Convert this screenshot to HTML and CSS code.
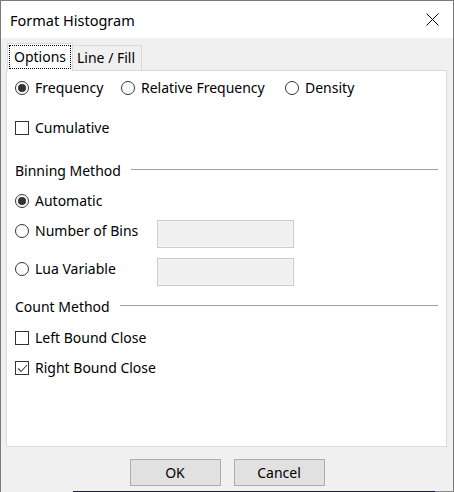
FILE: index.html
```html
<!DOCTYPE html>
<html>
<head>
<meta charset="utf-8">
<link rel="stylesheet" href="styles.css">
</head>
<body>
<div class="window">
  <div class="titlebar">
    <span class="title">Format Histogram</span>
    <svg class="close" width="13" height="13" viewBox="0 0 13 13"><path d="M0.5 0.5 L12.5 12.5 M12.5 0.5 L0.5 12.5" stroke="#000" stroke-width="1" fill="none"/></svg>
  </div>
  <div class="client">
    <div class="tabs">
      <div class="tab active"><span class="focus">Options</span></div>
      <div class="tab">Line / Fill</div>
    </div>
    <div class="panel">
      <div class="row r1">
        <label class="opt w1"><span class="radio on"></span>Frequency</label>
        <label class="opt w2"><span class="radio"></span>Relative Frequency</label>
        <label class="opt"><span class="radio"></span>Density</label>
      </div>
      <div class="row r2">
        <label class="opt"><span class="check"></span>Cumulative</label>
      </div>
      <div class="group r3"><span>Binning Method</span><span class="rule"></span></div>
      <div class="row r4">
        <label class="opt"><span class="radio on"></span>Automatic</label>
      </div>
      <div class="row inrow r5">
        <label class="opt wl"><span class="radio"></span>Number of Bins</label>
        <div class="field"></div>
      </div>
      <div class="row inrow r6">
        <label class="opt wl"><span class="radio"></span>Lua Variable</label>
        <div class="field"></div>
      </div>
      <div class="group r7"><span>Count Method</span><span class="rule"></span></div>
      <div class="row r8">
        <label class="opt"><span class="check"></span>Left Bound Close</label>
      </div>
      <div class="row r9">
        <label class="opt"><span class="check on"><svg width="11" height="11" viewBox="0 0 11 11"><path d="M1 5.5 L4 8.5 L10 2" stroke="#444" stroke-width="1.1" fill="none"/></svg></span>Right Bound Close</label>
      </div>
    </div>
    <div class="buttons">
      <button class="btn">OK</button>
      <button class="btn">Cancel</button>
    </div>
  </div>
  <div class="bottomedge"></div>
</div>
</body>
</html>
```
FILE: styles.css
```css
* { box-sizing: border-box; }
html, body { margin: 0; padding: 0; }
body {
  width: 454px;
  height: 492px;
  font-family: "Noto Sans", "Open Sans", sans-serif;
  font-size: 14px;
  color: #000;
  background: #f0f0f0;
  overflow: hidden;
}
.window {
  width: 454px;
  height: 492px;
  border: 1px solid #7a7a7a;
  border-bottom: none;
  display: flex;
  flex-direction: column;
  background: #f0f0f0;
}
.titlebar {
  height: 37px;
  background: #fff;
  display: flex;
  align-items: center;
  justify-content: space-between;
  padding: 0 14px 0 9px;
  flex: none;
}
.title { font-size: 14.5px; line-height: 20px; }
.close { display: block; }
.client {
  flex: 1;
  padding: 5px 6px 0 5px;
  display: flex;
  flex-direction: column;
}
.tabs {
  display: flex;
  height: 27px;
  padding-left: 1px;
  position: relative;
  z-index: 2;
}
.tab {
  border: 1px solid #d9d9d9;
  border-bottom: none;
  line-height: 20px;
}
.tab.active {
  width: 66px;
  height: 28px;
  background: #fff;
  padding: 1px 1px 0 1px;
}
.focus {
  display: block;
  outline: 1px dotted #000;
  outline-offset: -1px;
  height: 24px;
  line-height: 24px;
  padding-left: 5px;
}
.tab:not(.active) {
  width: 69px;
  height: 25px;
  margin-top: 2px;
  border-left: none;
  padding-left: 4px;
  line-height: 24px;
}
.panel {
  height: 377px;
  background: #fff;
  border: 1px solid #d9d9d9;
  padding: 0 8px 0 8px;
  display: flex;
  flex-direction: column;
}
.row { display: flex; align-items: center; height: 20px; flex: none; }
.opt { display: flex; align-items: center; height: 20px; line-height: 20px; white-space: nowrap; }
.w1 { width: 106px; }
.w2 { width: 164px; }
.wl { width: 142px; margin-top: 1px; }
.radio {
  width: 14px; height: 14px;
  border: 1px solid #333;
  border-radius: 50%;
  background: #fff;
  margin-right: 6px;
  display: flex; align-items: center; justify-content: center;
  flex: none;
}
.radio.on::after {
  content: "";
  width: 8px; height: 8px;
  border-radius: 50%;
  background: #333;
}
.check {
  width: 14px; height: 14px;
  border: 1px solid #333;
  background: #fff;
  margin-right: 6px;
  flex: none;
  display: flex; align-items: center; justify-content: center;
}
.check svg { display: block; }
.group { display: flex; align-items: center; height: 20px; flex: none; }
.rule { flex: 1; height: 1px; background: #a0a0a0; margin-left: 10px; margin-top: -1px; }
.inrow { height: 28px; align-items: flex-start; }
.field {
  width: 137px; height: 28px;
  border: 1px solid #cccccc;
  outline: 1px solid #f5f5f5;
  outline-offset: -2px;
  background: #f0f0f0;
}
.r1 { margin-top: 7px; }
.r2 { margin-top: 20px; }
.r3 { margin-top: 22px; }
.r4 { margin-top: 11px; }
.r5 { margin-top: 9px; }
.r6 { margin-top: 10px; }
.r7 { margin-top: 10px; }
.r8 { margin-top: 12px; }
.r9 { margin-top: 10px; }
.buttons {
  display: flex;
  justify-content: center;
  gap: 13px;
  margin-top: 12px;
  padding-left: 1px;
}
.btn {
  width: 91px; height: 27px;
  background: #e1e1e1;
  border: 1px solid #adadad;
  font-family: inherit;
  font-size: 14px;
  color: #000;
  padding: 0;
  margin: 0;
}
.bottomedge {
  height: 1px;
  flex: none;
  margin: 0 -1px;
  background: linear-gradient(to right, #7a7a7a 1px, #f0f0f0 1px, #f0f0f0 73px, #1c1c4c 73px, #1c1c4c 435px, #8a8a8a 435px);
}
```
